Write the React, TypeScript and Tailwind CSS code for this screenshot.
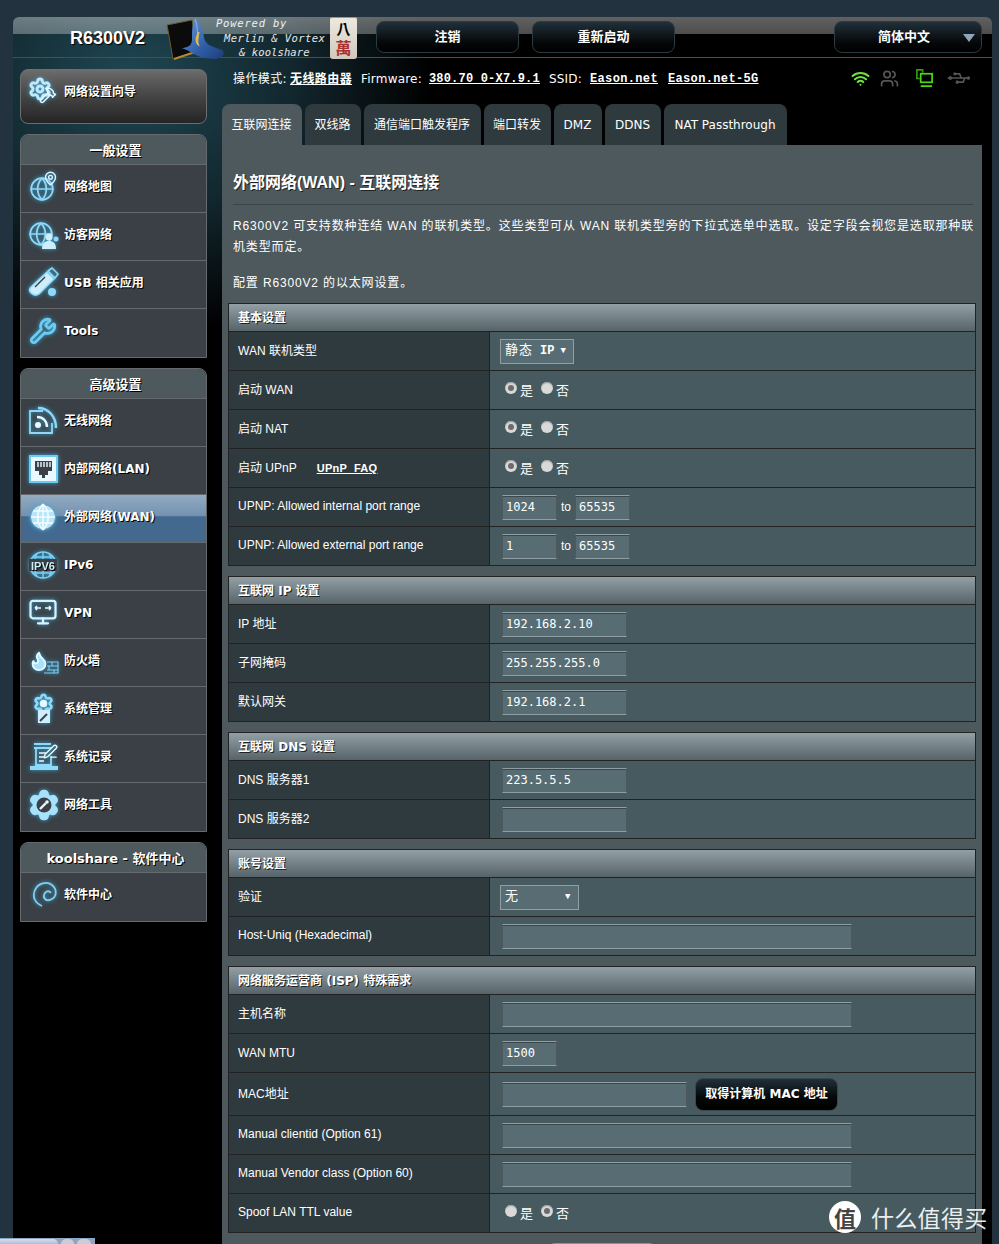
import React from 'react';
import { Globe, MapPin, Users, Wrench, Settings, Hammer, Wifi, Usb, Flame, Monitor, PenLine } from 'lucide-react';

const SANS = 'font-["Liberation_Sans","Noto_Sans_CJK_SC",sans-serif]';
const VERD = 'font-["DejaVu_Sans","Noto_Sans_CJK_SC",sans-serif]';
const MONO = 'font-["Liberation_Mono","Noto_Sans_CJK_SC",monospace]';
const INPUT = 'font-["DejaVu_Sans_Mono","Noto_Sans_CJK_SC",monospace]';
const BLUE = '#8fd8f7';

const Ico = ({ children }: { children: React.ReactNode }) => (
  <svg viewBox="0 0 32 32" className="w-8 h-8 shrink-0 [filter:drop-shadow(0_0_2px_#3fa9d8)]" fill="none" stroke={BLUE} strokeWidth="2">
    {children}
  </svg>
);

const WizardIcon = () => (
  <Ico>
    <Settings x={0} y={1} width={24} height={24} strokeWidth={3} color="#bfe9fb" />
    <Hammer x={11} y={10} width={18} height={18} strokeWidth={2} color="#e8f8ff" />
  </Ico>
);
const MapIcon = () => (
  <Ico>
    <Globe x={1} y={5} width={26} height={26} strokeWidth={1.6} color={BLUE} />
    <MapPin x={15} y={0} width={15} height={15} strokeWidth={2.2} color="#e0f5ff" />
  </Ico>
);
const GuestIcon = () => (
  <Ico>
    <Globe x={0} y={2} width={26} height={26} strokeWidth={1.6} color={BLUE} />
    <circle cx="21" cy="18" r="3.5" fill="#cfeefc" stroke="none" />
    <path d="M14 30c0-6 3-8 7-8s7 2 7 8z" fill="#cfeefc" stroke="none" />
    <circle cx="28" cy="20" r="2.5" fill={BLUE} stroke="none" />
  </Ico>
);
const UsbIcon = () => (
  <Ico>
    <path d="M3 20 19 5l7 7-15 15c-3 2-6 1-8-1s-2-4 0-6z" fill="#cfeefc" stroke={BLUE} strokeWidth="1.5" />
    <path d="m20 4 4-3 6 6-3 4z" fill="none" strokeWidth="1.6" />
    <path d="M7 20 17 10" stroke="#3a4045" strokeWidth="1.5" />
    <circle cx="24" cy="25" r="4" fill={BLUE} stroke="none" />
  </Ico>
);
const ToolsIcon = () => (
  <Ico>
    <Wrench x={1} y={2} width={28} height={28} strokeWidth={2.4} color="#6ccbf3" />
  </Ico>
);
const WirelessIcon = () => (
  <Ico>
    <path d="M15 6H2v22h22V18" strokeWidth="1.8" />
    <circle cx="10" cy="20" r="3" fill="#eaf9ff" stroke="none" />
    <path d="M9 12c6 0 10 4 10 10" stroke="#eaf9ff" strokeWidth="2.4" />
    <path d="M10 3c10 0 18 8 18 20" strokeWidth="2.4" />
  </Ico>
);
const LanIcon = () => (
  <Ico>
    <rect x="2" y="3" width="27" height="26" fill="#eaf9ff" stroke="#6ccbf3" strokeWidth="2" />
    <path d="M7 8h17v10h-4v4h-3v3h-3v-3h-3v-4H7z" fill="#3a4045" stroke="none" />
    <path d="M10 9v5M13 9v5M16 9v5M19 9v5M22 9v5" stroke="#eaf9ff" strokeWidth="1.4" />
  </Ico>
);
const WanIcon = () => (
  <Ico>
    <circle cx="15" cy="16" r="12.5" fill="#b7e6fa" stroke="#6f96b4" strokeWidth="1" />
    <path d="M3 16h24M5 10h20M5 22h20M15 3v26M15 3c-7 7-7 19 0 26M15 3c7 7 7 19 0 26" stroke="#f4fcff" strokeWidth="1.5" />
  </Ico>
);
const Ipv6Icon = () => (
  <Ico>
    <circle cx="15" cy="16" r="13" stroke="#7ccff3" strokeWidth="1.6" />
    <path d="M5 8h20M5 24h20M15 3v7M15 22v7M9 5c-1 1-2 3-2 5M21 5c1 1 2 3 2 5M9 27c-1-1-2-3-2-5M21 27c1-1 2-3 2-5" stroke="#7ccff3" strokeWidth="1.4" />
    <rect x="1" y="10" width="28" height="12" fill="#3a4045" stroke="none" />
    <text x="15" y="20.5" textAnchor="middle" fontSize="11" fontWeight="700" fontFamily="Liberation Sans" fill="#cfeefc" stroke="none">IPV6</text>
  </Ico>
);
const VpnIcon = () => (
  <Ico>
    <Monitor x={0} y={0} width={30} height={30} strokeWidth={1.8} color="#d9f3fe" />
    <path d="M7 11h6M7 11l2-2M7 11l2 2M17 11h6M23 11l-2-2M23 11l-2 2" stroke="#eaf9ff" strokeWidth="1.5" />
  </Ico>
);
const FireIcon = () => (
  <Ico>
    <Flame x={0} y={3} width={22} height={26} strokeWidth={2} color="#eaf9ff" fill="#a8e2fa" />
    <path d="M19 17h11v11H16M19 21h11M19 25h11M24 17v4M21 21v4M26 25v3" stroke="#7ccff3" strokeWidth="1.1" />
  </Ico>
);
const AdminIcon = () => (
  <Ico>
    <Settings x={5} y={0} width={21} height={21} strokeWidth={3} color="#8fd8f7" />
    <circle cx="15.5" cy="10.5" r="3.5" fill="#eaf9ff" stroke="none" />
    <path d="M10 17h12v13H10z" fill="#cfeefc" stroke="none" />
    <path d="M12 28l7-7" stroke="#3a4045" strokeWidth="2" />
  </Ico>
);
const LogIcon = () => (
  <Ico>
    <path d="M6 3h17M6 7h17M8 7v17h15V15" strokeWidth="1.8" />
    <path d="M11 12h7M11 16h5M11 20h5" stroke="#eaf9ff" strokeWidth="1.5" />
    <PenLine x={15} y={3} width={15} height={15} strokeWidth={2.2} color="#eaf9ff" />
    <path d="M2 25h28v4H2z" fill="#8fd8f7" stroke="none" />
  </Ico>
);
const NetToolsIcon = () => (
  <Ico>
    <Settings x={0} y={0} width={32} height={32} strokeWidth={2.8} color="#a8e2fa" fill="#a8e2fa" />
    <circle cx="16" cy="16" r="7.5" fill="#3a4045" stroke="none" />
    <path d="m12 20 6-6" stroke="#eaf9ff" strokeWidth="2.4" />
    <circle cx="19" cy="13" r="1.8" fill="#eaf9ff" stroke="none" />
  </Ico>
);
const SwirlIcon = () => (
  <Ico>
    <path d="M14 27C7 24 4 18 7 11s12-9 17-5 5 11 0 14-9 0-8-4 5-5 7-2" stroke="#7fd0f3" strokeWidth="1.8" />
  </Ico>
);

type Item = { label: string; icon: React.ReactNode; active?: boolean };

const general: Item[] = [
  { label: '网络地图', icon: <MapIcon /> },
  { label: '访客网络', icon: <GuestIcon /> },
  { label: 'USB 相关应用', icon: <UsbIcon /> },
  { label: 'Tools', icon: <ToolsIcon /> },
];
const advanced: Item[] = [
  { label: '无线网络', icon: <WirelessIcon /> },
  { label: '内部网络(LAN)', icon: <LanIcon /> },
  { label: '外部网络(WAN)', icon: <WanIcon />, active: true },
  { label: 'IPv6', icon: <Ipv6Icon /> },
  { label: 'VPN', icon: <VpnIcon /> },
  { label: '防火墙', icon: <FireIcon /> },
  { label: '系统管理', icon: <AdminIcon /> },
  { label: '系统记录', icon: <LogIcon /> },
  { label: '网络工具', icon: <NetToolsIcon /> },
];

const MenuGroup = ({ title, items }: { title: string; items: Item[] }) => (
  <div className="rounded-t-lg border border-[#666a6d] bg-[#3a4045] pb-[1px]">
    <div className={`h-[29px] rounded-t-lg bg-[#4d595d] flex items-center justify-center pl-1 pt-[2px] text-[13px] font-bold text-white [text-shadow:1px_1px_0_#000] ${VERD}`}>
      {title}
    </div>
    {items.map((it) => (
      <div
        key={it.label}
        className={`h-[48px] border-t border-[#666a6d] flex items-center gap-[4px] pl-[7px] pb-[4px] text-[12px] font-bold text-white [text-shadow:1px_1px_0_#000] ${VERD} ${
          it.active ? 'bg-[linear-gradient(180deg,#93abc2_0%,#7391af_45%,#43698f_46%,#43698f_100%)]' : ''
        }`}
      >
        {it.icon}
        <span>{it.label}</span>
      </div>
    ))}
  </div>
);

const HeadBtn = ({ label, className }: { label: string; className: string }) => (
  <div className={`h-[32px] rounded-lg border border-[#2c3a42] bg-[linear-gradient(180deg,#21303a_0%,#050708_70%,#000_100%)] flex items-center justify-center text-[13px] font-bold text-white ${VERD} ${className}`}>
    {label}
  </div>
);

const Section = ({ title, children }: { title: string; children: React.ReactNode }) => (
  <div className="mb-[10px] border-x border-t border-[#222]">
    <div className={`h-[28px] border-b border-[#222] bg-[linear-gradient(180deg,#929fa4_0%,#566368_100%)] pl-[9px] pt-[1px] flex items-center text-[12px] font-bold text-white [text-shadow:1px_1px_0_#222] ${VERD}`}>
      {title}
    </div>
    {children}
  </div>
);

const Row = ({ label, tall, up, children }: { label: React.ReactNode; tall?: boolean; up?: boolean; children?: React.ReactNode }) => (
  <div className={`flex border-b border-[#222] ${tall ? 'h-[43px]' : 'h-[39px]'}`}>
    <div className={`w-[261px] shrink-0 bg-[#2f3a3f] pl-[9px] flex items-center border-r border-[#222] text-[12px] text-white ${SANS} ${up ? 'pb-[2px]' : ''}`}>
      {label}
    </div>
    <div className="flex-1 bg-[#475a5f] pl-[12px] flex items-center">{children}</div>
  </div>
);

const Field = ({ value, w }: { value?: string; w: string }) => (
  <div className={`h-[25px] ${w} bg-[#576d73] border-y border-y-[#8f9ea3] border-x border-x-[#4d595d] shadow-[inset_0_1px_0_#3c474b] pl-[3px] flex items-center text-[12px] text-white ${INPUT}`}>
    {value}
  </div>
);

const Dropdown = ({ children, w }: { children: React.ReactNode; w: string }) => (
  <div className={`-ml-[2px] h-[25px] ${w} bg-[#576d73] border border-[#929ea1] flex items-center pl-[4px] text-[12px] text-white ${MONO}`}>
    {children}
  </div>
);

const Radio = ({ on }: { on?: boolean }) => (
  <span className="w-[12px] h-[12px] rounded-full flex items-center justify-center bg-[#d9d9d9] shadow-[inset_0_1px_1px_#999] -mt-[4px]">
    {on && <span className="w-[6px] h-[6px] rounded-full bg-[#6b6b6b]" />}
  </span>
);

const YesNo = ({ yes = true }: { yes?: boolean }) => (
  <div className={`pl-[3px] flex items-center text-[13px] text-white ${SANS}`}>
    <Radio on={yes} />
    <span className="ml-[3px] mt-[2px]">是</span>
    <span className="ml-[8px]"><Radio on={!yes} /></span>
    <span className="ml-[3px] mt-[2px]">否</span>
  </div>
);

const To = ({ from, end }: { from: string; end: string }) => (
  <div className={`flex items-center text-[12px] text-white ${SANS}`}>
    <Field value={from} w="w-[55px]" />
    <span className="mx-[4px]">to</span>
    <Field value={end} w="w-[55px]" />
  </div>
);

const tabs = [
  { label: '互联网连接', w: 'w-[80px]' },
  { label: '双线路', w: 'w-[56px]' },
  { label: '通信端口触发程序', w: 'w-[117px]' },
  { label: '端口转发', w: 'w-[67px]' },
  { label: 'DMZ', w: 'w-[48px]' },
  { label: 'DDNS', w: 'w-[56px]' },
  { label: 'NAT Passthrough', w: 'w-[123px]' },
];

const Logo = () => (
  <div className="flex items-start h-[43px] ml-[21px] shrink-0">
    <svg viewBox="0 0 60 44" className="w-[60px] h-[44px] shrink-0">
      <defs>
        <linearGradient id="hat" x1="0" y1="0" x2="1" y2="1">
          <stop offset="0" stopColor="#6f9ad8" />
          <stop offset="0.6" stopColor="#2f5ea6" />
          <stop offset="1" stopColor="#1c3d78" />
        </linearGradient>
      </defs>
      <path d="M1 8 26 3l6 31-25 8z" fill="#0b0b0b" stroke="#6b5a2a" strokeWidth="1" />
      <path d="M8 42l24-8" stroke="#b58a2c" strokeWidth="2" />
      <path d="M29 1c5 5 8 12 9 19 1 7 6 9 18 13 4 3 1 9-8 9-10 0-20-4-27-9-3-1-5-2-4-2 6-1 9-3 9-9 0-8 0-15 3-21z" fill="url(#hat)" />
      <path d="M33 15c-4 5-4 11 0 14-2-4-1-9 0-14z" fill="#e2bd47" stroke="#e2bd47" strokeWidth="1" />
      <path d="M29 2c3 7 2 14 3 20" stroke="#9fc0ea" strokeWidth="0.8" fill="none" />
    </svg>
    <div className={`-ml-[10px] w-[113px] -mt-[1px] shrink-0 text-[10.5px] leading-[14.5px] italic text-white/90 whitespace-nowrap ${INPUT}`}>
      <div className="tracking-[0.8px]">Powered by</div>
      <div className="pl-[8px] tracking-[0.42px]">Merlin &amp; Vortex</div>
      <div className="pl-[23px] tracking-[0.1px]">&amp; koolshare</div>
    </div>
    <div className="ml-[1px] w-[27px] h-[43px] -mt-[1px] rounded-[3px] shrink-0 border-t-2 border-[#d98a2b] bg-[linear-gradient(180deg,#eee9df,#cfc9bc)] flex flex-col items-center overflow-hidden font-['Noto_Sans_CJK_TC',serif]">
      <span className="text-[14px] leading-[14px] mt-[3px] font-bold text-black">八</span>
      <span className="text-[16px] leading-[16px] mt-[4px] font-bold text-[#a8332f]">萬</span>
    </div>
  </div>
);

export default function App() {
  return (
    <div className={`relative w-[999px] h-[1244px] overflow-hidden bg-[#22333f] pt-[17px] pl-[13px] ${SANS}`}>
      <div className="w-[979px] h-[1227px] rounded-t-md overflow-hidden bg-[radial-gradient(ellipse_300px_260px_at_12%_5%,#1f4753_0%,#12262d_55%,#000_100%)]">
        {/* top bar */}
        <div className="h-[41px] flex items-start border-b border-[#3f515c] bg-[linear-gradient(180deg,rgba(255,255,255,0.38)_0,rgba(255,255,255,0.3)_17px,transparent_17px)]">
          <div className="ml-[57px] mt-[9px] text-[18px] font-bold leading-[24px] text-white w-[75px] [text-shadow:1px_1px_1px_#000] shrink-0">R6300V2</div>
          <Logo />
          <HeadBtn label="注销" className="w-[143px] ml-[19px] mt-[4px]" />
          <HeadBtn label="重新启动" className="w-[143px] ml-[13px] mt-[4px]" />
          <div className="relative ml-[159px] mt-[4px]">
            <HeadBtn label="简体中文" className="w-[148px] pr-[8px]" />
            <span className="absolute right-[7px] top-[13px] w-0 h-0 border-x-[6px] border-x-transparent border-t-[8px] border-t-[#8fa5b8]" />
          </div>
        </div>

        <div className="flex">
          {/* sidebar */}
          <div className="ml-[7px] w-[187px] shrink-0 flex flex-col gap-[10px] pt-[11px]">
            <div className={`h-[55px] rounded-lg border border-[#6c6f72] bg-[linear-gradient(180deg,#6c6c6c_0%,#4b4b4b_40%,#242424_100%)] flex items-start pt-[6px] gap-[4px] pl-[7px] text-[12px] font-bold text-white [text-shadow:1px_1px_0_#000] ${VERD}`}>
              <WizardIcon />
              <span className="mt-[7px]">网络设置向导</span>
            </div>
            <MenuGroup title="一般设置" items={general} />
            <MenuGroup title="高级设置" items={advanced} />
            <MenuGroup title="koolshare - 软件中心" items={[{ label: '软件中心', icon: <SwirlIcon /> }]} />
          </div>

          {/* main */}
          <div className="ml-[15px] w-[760px] shrink-0">
            <div className="h-[46px] pt-[12px] pl-[11px] flex items-start text-[12px] leading-[18px] text-white">
              <span className={`tracking-[0.4px] ${VERD}`}>操作模式:</span>
              <span className={`ml-[3px] font-bold underline tracking-[0.4px] ${VERD}`}>无线路由器</span>
              <span className={`ml-[9px] tracking-[0.2px] ${VERD}`}>Firmware:</span>
              <span className={`ml-[7px] font-bold underline tracking-[0.2px] ${MONO}`}>380.70_0-X7.9.1</span>
              <span className={`ml-[9px] tracking-[0.2px] ${VERD}`}>SSID:</span>
              <span className={`ml-[8px] font-bold underline tracking-[0.35px] ${MONO}`}>Eason.net</span>
              <span className={`ml-[10px] font-bold underline tracking-[0.35px] ${MONO}`}>Eason.net-5G</span>
              <div className="ml-[92px] flex items-center -mt-[2px]">
                <Wifi className="w-[19px] h-[19px] text-[#6fe23a]" strokeWidth={2.6} />
                <Users className="ml-[10px] w-[19px] h-[19px] text-[#555]" strokeWidth={2.2} />
                <svg viewBox="0 0 20 20" className="ml-[16px] w-[19px] h-[19px]" fill="none" stroke="#4bd80f" strokeWidth="1.8">
                  <path d="M8 4V1H2v9h3" stroke="#2f9c10" />
                  <rect x="6" y="5" width="12" height="9" />
                  <path d="M6 18h12" strokeWidth="2" />
                </svg>
                <Usb className="ml-[15px] w-[20px] h-[20px] text-[#555] rotate-[-135deg]" strokeWidth={2} />
              </div>
            </div>
            <div className="flex gap-[3px] h-[41px]">
              {tabs.map((t, i) => (
                <div
                  key={t.label}
                  className={`${t.w} rounded-t-lg flex items-center justify-center pr-[1px] text-[12px] text-white ${VERD} ${i === 0 ? 'bg-[#4d595d]' : 'bg-[#2f3a3f]'}`}
                >
                  {t.label}
                </div>
              ))}
            </div>

            <div className="bg-[#4d595d] px-[6px] h-[1100px]">
              <div className={`pl-[5px] pt-[28px] h-[59px] leading-[20px] text-[16px] font-bold text-white [text-shadow:1px_1px_0_#222] ${SANS}`}>
                外部网络(WAN) - 互联网连接
              </div>
              <div className="ml-[5px] w-[740px] border-t border-[#39454a] h-0" />
              <div className="pl-[5px] pt-[11px] text-[12px] leading-[21px] tracking-[0.85px] text-white whitespace-nowrap">
                R6300V2 可支持数种连结 WAN 的联机类型。这些类型可从 WAN 联机类型旁的下拉式选单中选取。设定字段会视您是选取那种联
                <br />
                机类型而定。
              </div>
              <div className="pl-[5px] pt-[15px] text-[12px] leading-[21px] tracking-[0.85px] text-white mb-[9px]">配置 R6300V2 的以太网设置。</div>

              <Section title="基本设置">
                <Row label="WAN 联机类型">
                  <Dropdown w="w-[74px]">
                    <span className="text-[13px] tracking-[1px]">静态</span>
                    <span className="ml-[7px] mr-[6px] font-bold">IP</span>
                    <span className="text-[9px] leading-none">▼</span>
                  </Dropdown>
                </Row>
                <Row label="启动 WAN"><YesNo /></Row>
                <Row label="启动 NAT"><YesNo /></Row>
                <Row label={<span>启动 UPnP<span className="ml-[20px] font-bold text-[11px] underline tracking-[0.3px]">UPnP&nbsp; FAQ</span></span>}><YesNo /></Row>
                <Row up label="UPNP: Allowed internal port range"><To from="1024" end="65535" /></Row>
                <Row up label="UPNP: Allowed external port range"><To from="1" end="65535" /></Row>
              </Section>

              <Section title="互联网 IP 设置">
                <Row label="IP 地址"><Field value="192.168.2.10" w="w-[125px]" /></Row>
                <Row label="子网掩码"><Field value="255.255.255.0" w="w-[125px]" /></Row>
                <Row label="默认网关"><Field value="192.168.2.1" w="w-[125px]" /></Row>
              </Section>

              <Section title="互联网 DNS 设置">
                <Row label="DNS 服务器1"><Field value="223.5.5.5" w="w-[125px]" /></Row>
                <Row label="DNS 服务器2"><Field w="w-[125px]" /></Row>
              </Section>

              <Section title="账号设置">
                <Row label="验证">
                  <Dropdown w="w-[79px]">
                    <span className="text-[13px] mr-[47px]">无</span>
                    <span className="text-[9px] leading-none">▼</span>
                  </Dropdown>
                </Row>
                <Row up label="Host-Uniq (Hexadecimal)"><Field w="w-[350px]" /></Row>
              </Section>

              <Section title="网络服务运营商 (ISP) 特殊需求">
                <Row label="主机名称"><Field w="w-[350px]" /></Row>
                <Row label="WAN MTU"><Field value="1500" w="w-[55px]" /></Row>
                <Row label="MAC地址" tall>
                  <Field w="w-[185px]" />
                  <button className={`ml-[8px] w-[143px] h-[33px] rounded-lg border border-[#39474c] bg-[linear-gradient(180deg,#21303a_0%,#050708_60%,#000_100%)] text-[12px] font-bold text-white ${VERD}`}>
                    取得计算机 MAC 地址
                  </button>
                </Row>
                <Row up label="Manual clientid (Option 61)"><Field w="w-[350px]" /></Row>
                <Row up label="Manual Vendor class (Option 60)"><Field w="w-[350px]" /></Row>
                <Row up label="Spoof LAN TTL value"><YesNo yes={false} /></Row>
              </Section>

              <div className="ml-[319px] w-[110px] h-[30px] rounded-t-lg border-t border-[#8a9296] bg-[#111]" />
            </div>
          </div>
        </div>
      </div>

      {/* watermark */}
      <div className="absolute left-[829px] top-[1201px] flex items-center gap-[10px]">
        <div className="w-[32px] h-[32px] rounded-full bg-white flex items-center justify-center text-[22px] font-bold text-[#444] font-['Noto_Sans_CJK_SC',sans-serif]">值</div>
        <div className="text-[23px] tracking-[0.3px] leading-[32px] text-white/90 font-['Noto_Sans_CJK_SC',sans-serif] whitespace-nowrap">什么值得买</div>
      </div>

      {/* window edge peeking in at the bottom */}
      <div className="absolute left-0 top-[1238px] w-[95px] h-[6px] bg-[#8ea5c4] pt-[1px] flex gap-[3px]">
        <div className="w-[58px] bg-[linear-gradient(180deg,#d5deea,#aebfd6)] rounded-tr-md" />
        <div className="w-[13px] bg-[#c9ced6] rounded-t-md" />
        <div className="w-[14px] bg-[#c9ced6] rounded-t-md" />
      </div>
    </div>
  );
}
